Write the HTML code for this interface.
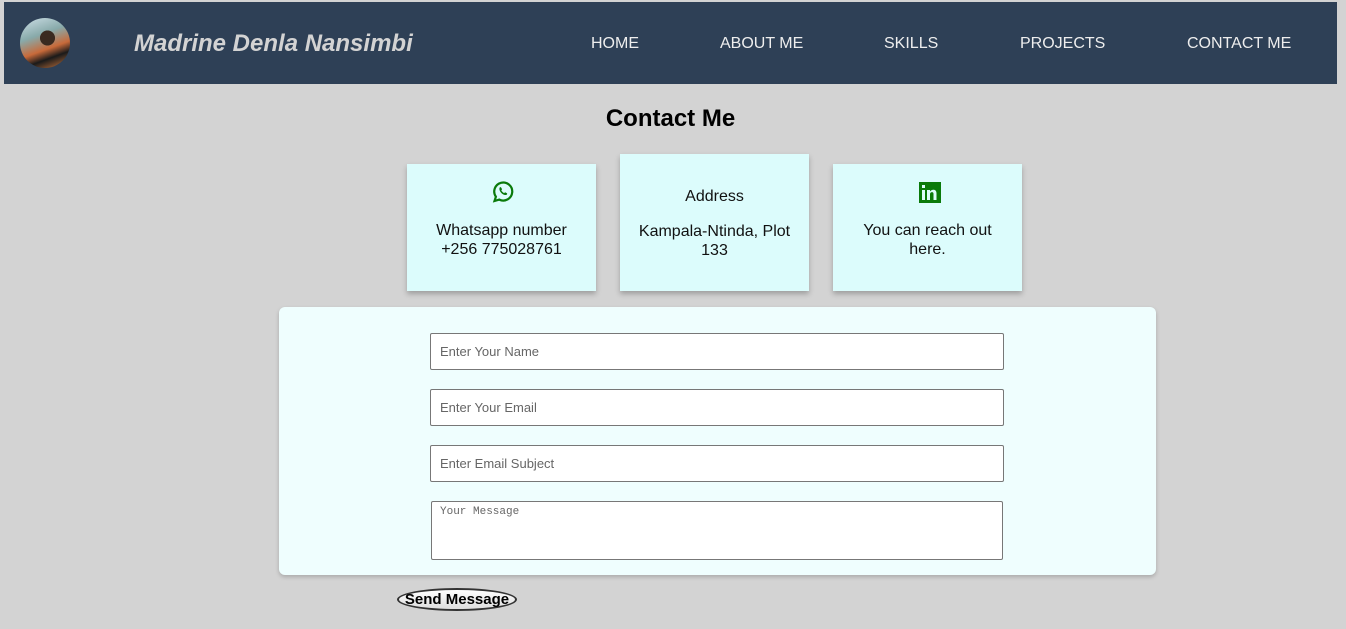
<!DOCTYPE html>
<html><head><meta charset="utf-8"><style>
*{box-sizing:border-box}
body{margin:0;width:1346px;height:629px;background:#d3d3d3;font-family:"Liberation Sans",Arial,sans-serif;position:relative;overflow:hidden}
.nav{position:absolute;left:4px;top:2px;width:1333px;height:82px;background:#2e4056}
.avatar{position:absolute;left:16px;top:16px;width:50px;height:50px;border-radius:50%;background:radial-gradient(circle at 55% 40%,#3a2a20 0 18%,transparent 19%),linear-gradient(160deg,#cfe0e8 0%,#8aa 35%,#c86a3a 60%,#1a1a1a 75%,#d07a40 100%)}
.name{position:absolute;left:130px;top:28px;font-size:24px;font-style:italic;font-weight:bold;color:#d3d3d3}
.links a{position:absolute;top:33px;font-size:16px;color:#eee;text-decoration:none}
h2{position:absolute;left:0;width:1341px;text-align:center;top:105px;margin:0;font-size:24px;font-weight:bold}
.card{position:absolute;width:189px;height:127px;background:#dcfcfc;box-shadow:0 3px 5px rgba(0,0,0,.25);text-align:center;font-size:16px;color:#111;line-height:19px}
.card .t{position:absolute;left:0;right:0;top:57px}
.form{position:absolute;left:279px;top:307px;width:877px;height:268px;background:#effefe;border-radius:6px;box-shadow:0 2px 4px rgba(0,0,0,.2)}
.in{position:absolute;left:151px;width:574px;height:37px;background:#fff;border:1px solid #777;border-radius:2px;font-size:13px;color:#666;padding:10px 9px}
.ta{position:absolute;left:152px;top:194px;width:572px;height:59px;background:#fff;border:1px solid #777;border-radius:2px;font-family:"Liberation Mono",monospace;font-size:11px;color:#666;padding:4px 8px}
.btn{position:absolute;left:397px;top:588px;width:120px;height:23px;border:2px solid #333;border-radius:50%/50%;background:linear-gradient(#fff,#ddd);font-weight:bold;font-size:15px;text-align:center;line-height:19px}
</style></head><body>
<div class="nav">
<div class="avatar"></div>
<div class="name">Madrine Denla Nansimbi</div>
<div class="links">
<a style="left:587px">HOME</a>
<a style="left:716px">ABOUT ME</a>
<a style="left:880px">SKILLS</a>
<a style="left:1016px">PROJECTS</a>
<a style="left:1183px">CONTACT ME</a>
</div></div>
<h2>Contact Me</h2>
<div class="card" style="left:407px;top:164px">
<svg style="position:absolute;left:84px;top:16px" width="24" height="24" viewBox="0 0 24 24"><path d="M3.5 21l1.4-4.3A9 9 0 1 1 8.3 19.6Z" fill="none" stroke="#0a7a0a" stroke-width="2.2"/><path d="M8.5 8c.3-1 1.2-1.1 1.6-.5l1 1.8-.8 1c.6 1.3 1.5 2.2 2.8 2.8l1-.8 1.8 1c.5.4.4 1.3-.5 1.6-3.2 1-7.8-3.6-6.9-6.9Z" fill="#0a7a0a"/></svg>
<div class="t">Whatsapp number<br>+256 775028761</div></div>
<div class="card" style="left:620px;top:154px;height:137px">
<div style="position:absolute;left:0;right:0;top:33px">Address</div>
<div class="t" style="top:68px">Kampala-Ntinda, Plot<br>133</div></div>
<div class="card" style="left:833px;top:164px">
<svg style="position:absolute;left:86px;top:18px" width="22" height="21" viewBox="0 0 22 21"><rect width="22" height="21" fill="#0a7a0a"/><rect x="3" y="8" width="3" height="10" fill="#dcfcfc"/><rect x="3" y="3" width="3" height="3" fill="#dcfcfc"/><path d="M8 8h3v1.5c.8-1.2 2-1.8 3.3-1.8 2.2 0 3.2 1.3 3.2 3.8V18h-3v-6c0-1.3-.5-1.9-1.5-1.9S11 10.8 11 12v6H8Z" fill="#dcfcfc"/></svg>
<div class="t">You can reach out<br>here.</div></div>
<div class="form">
<div class="in" style="top:26px">Enter Your Name</div>
<div class="in" style="top:82px">Enter Your Email</div>
<div class="in" style="top:138px">Enter Email Subject</div>
<div class="ta">Your Message</div>
</div>
<div class="btn">Send Message</div>
</body></html>
